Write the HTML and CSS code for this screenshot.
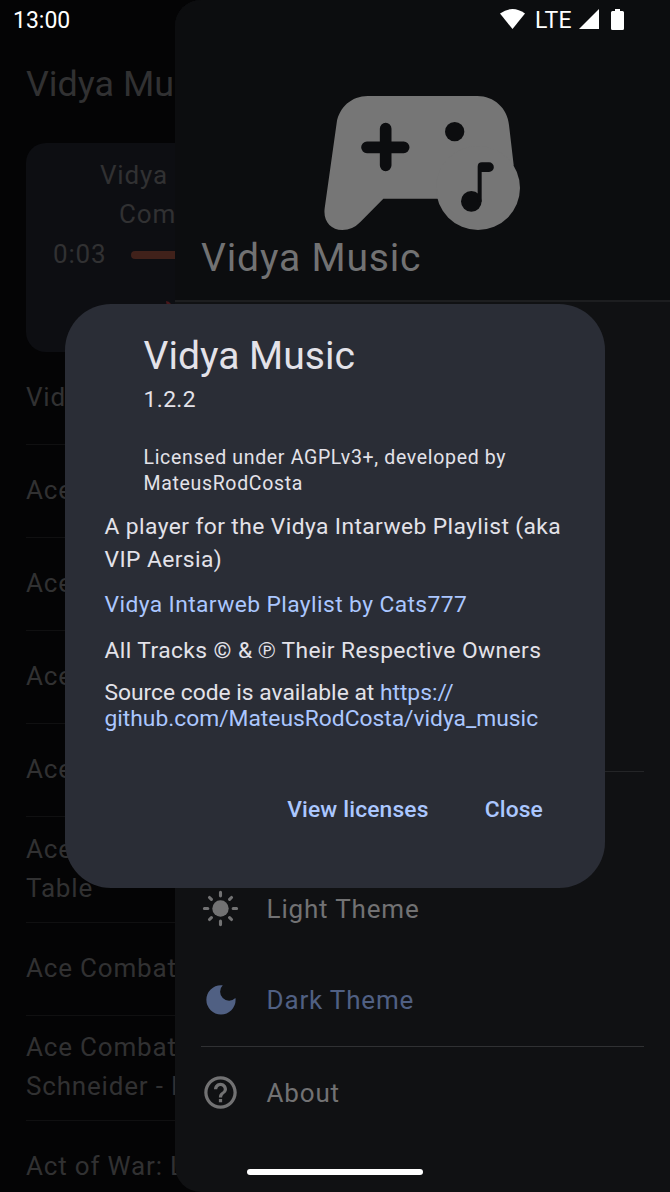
FILE: index.html
```
<!DOCTYPE html>
<html lang="en">
<head>
<meta charset="utf-8">
<title>Vidya Music</title>
<link rel="stylesheet" href="styles.css">
</head>
<body>
<div class="screen">
  <main class="player">
    <h1 class="app-title">Vidya Music</h1>
    <section class="now-playing">
      <p class="track">Vidya</p>
      <p class="track track-second">Coming</p>
      <div class="progress"><span class="time">0:03</span><span class="slider"></span></div>
      <svg class="skip" viewBox="0 0 12 12"><path d="M0 0Q3 0 5 3L12 12H2Z"/></svg>
    </section>
    <ul class="tracks">
      <li>Vid</li>
      <li>Ace</li>
      <li>Ace</li>
      <li>Ace</li>
      <li>Ace</li>
      <li class="two">Ace<br>Table</li>
      <li>Ace Combat</li>
      <li class="two">Ace Combat<br>Schneider - L</li>
      <li class="last">Act of War: L</li>
    </ul>
  </main>

  <aside class="drawer">
    <header class="drawer-header">
      <svg class="logo" viewBox="0 0 675 465">
        <path class="pad" d="M173 33H502C552 33 592 69 597 120L611 240L504 341H220L151 411Q128 435 97 435C62 435 39 408 44 370L80 114C87 67 125 33 173 33Z"/>
        <circle class="pad" cx="504" cy="309" r="126"/>
        <path class="plus" d="M227 131V241M171 187H281"/>
        <circle cx="434" cy="140" r="29"/><circle cx="484" cy="349" r="31"/>
        <path d="M503 349V245Q503 232 516 232H537A14 14 0 0 1 537 261H515V349Z"/>
      </svg>
      <h2>Vidya Music</h2>
    </header>
    <nav class="menu">
      <div class="menu-space"></div>
      <div class="themes">
        <div class="menu-item">
          <svg viewBox="0 0 40 40"><circle cx="20" cy="20" r="8.4" fill="currentColor"/><path class="ray" d="M20 3.500V7M20 33V36.500M3.500 20H7M33 20H36.500M8.700 8.700L10.700 10.700M29.300 29.300L31.300 31.300M31.300 8.700L29.300 10.700M10.700 29.300L8.700 31.300"/></svg>
          <span>Light Theme</span>
        </div>
        <div class="menu-item active">
          <svg viewBox="0 0 40 40"><path fill="currentColor" d="M20.500 5.300A15 15 0 1 0 35.500 20.300Q35.500 19.400 35.300 18.500A9 9 0 1 1 22.300 5.500Q21.400 5.300 20.500 5.300Z"/></svg>
          <span>Dark Theme</span>
        </div>
      </div>
      <div class="menu-item about-item">
        <svg viewBox="0 0 24 24"><path fill="currentColor" d="M11 18h2v-2h-2v2zm1-16C6.480 2 2 6.480 2 12s4.480 10 10 10 10-4.480 10-10S17.520 2 12 2zm0 18c-4.410 0-8-3.590-8-8s3.590-8 8-8 8 3.590 8 8-3.590 8-8 8zm0-14c-2.210 0-4 1.790-4 4h2c0-1.100.9-2 2-2s2 .9 2 2c0 2-3 1.750-3 5h2c0-2.250 3-2.500 3-5 0-2.210-1.790-4-4-4z"/></svg>
        <span>About</span>
      </div>
    </nav>
  </aside>

  <section class="dialog">
    <div class="about">
      <h2>Vidya Music</h2>
      <p class="version">1.2.2</p>
      <p class="license">Licensed under AGPLv3+, developed by<br>MateusRodCosta</p>
    </div>
    <div class="details">
      <p>A player for the Vidya Intarweb Playlist (aka<br>VIP Aersia)</p>
      <p class="link">Vidya Intarweb Playlist by Cats777</p>
      <p>All Tracks © &amp; ℗ Their Respective Owners</p>
      <p class="source">Source code is available at <span class="link">https://<br>github.com/MateusRodCosta/vidya_music</span></p>
    </div>
    <div class="actions"><span>View licenses</span><span>Close</span></div>
  </section>

  <div class="status">
    <span class="clock">13:00</span>
    <svg class="wifi" viewBox="0 0 25 20"><path d="M0 4.500Q12.500-4.500 25 4.500L12.500 20Z"/></svg>
    <span class="network">LTE</span>
    <svg class="signal" viewBox="0 0 20 20"><path d="M20 0V20H0Z"/></svg>
    <svg class="battery" viewBox="0 0 13 21"><path d="M4 0H9V2H11.500Q13 2 13 3.500V19.500Q13 21 11.500 21H1.500Q0 21 0 19.500V3.500Q0 2 1.500 2H4Z"/></svg>
  </div>
  <div class="home-bar"></div>
</div>
</body>
</html>
```
FILE: styles.css
```
* { box-sizing: border-box; }
body, h1, h2, p, ul { margin: 0; padding: 0; font-weight: 400; }
body { background: #040405; font-family: Roboto, sans-serif; }
svg { display: block; flex: none; }

.screen { position: relative; width: 670px; height: 1192px; overflow: hidden; background: #040405; }

.player { padding: 0 26px; color: #313132; font-size: 26px; letter-spacing: .82px; line-height: 39px; }
.app-title { height: 143px; padding-top: 58px; font-size: 35.9px; line-height: 52px; letter-spacing: 0; }
.now-playing { height: 209px; border-radius: 20px; background: #0d0e12; padding: 13px 26px; white-space: nowrap; }
.track { padding-left: 48px; }
.track-second { padding-left: 67px; }
.progress { display: flex; align-items: center; gap: 25px; padding: 1px 0 0 1px; }
.slider { flex: 1; height: 8px; border-radius: 4px; background: #40211a; }
.skip { width: 12px; height: 12px; margin: 27px 0 0 114px; fill: #48171b; }
.tracks { list-style: none; white-space: nowrap; }
.tracks li { height: 93px; padding-top: 26px; border-bottom: 1px solid #101011; }
.tracks .two { height: 105.500px; padding-top: 12.500px; }
.tracks .last { border: 0; height: 72px; }

.drawer { position: absolute; inset: 0 0 0 175px; border-radius: 26px 0 0 26px; background: #101113; color: #727273; overflow: hidden; }
.drawer-header { height: 302px; padding: 85px 26px 0; background: #0c0d0f; border-bottom: 2px solid #1d1e20; }
.logo { width: 225px; height: 155px; margin-left: 109px; fill: #0c0d0f; }
.logo .pad { fill: #767676; }
.logo .plus { fill: none; stroke: #0c0d0f; stroke-width: 35; stroke-linecap: round; }
.drawer h2 { font-size: 39.1px; line-height: 52px; letter-spacing: .82px; margin-top: -8px; }
.menu { padding: 0 26px; }
.menu-space { height: 470px; border-bottom: 1px solid #242527; }
.themes { height: 275px; padding-top: 91px; border-bottom: 1px solid #303133; }
.menu-item { display: flex; align-items: center; gap: 26.600px; height: 91px; font-size: 26px; letter-spacing: .82px; }
.menu-item svg { width: 39px; height: 39px; }
.ray { fill: none; stroke: currentColor; stroke-width: 3.200; stroke-linecap: round; }
.active { color: #506083; }

.dialog { position: absolute; left: 65px; top: 304px; width: 540px; height: 584px; padding: 26px 39.500px; border-radius: 46px; background: #2a2d36; color: #e3e2e9; white-space: nowrap; }
.about { padding-left: 39px; }
.about h2 { font-size: 39.1px; line-height: 52px; }
.version { padding-top: 1px; font-size: 22.800px; line-height: 33px; letter-spacing: .41px; }
.license { margin-top: 29px; font-size: 19.500px; line-height: 26px; letter-spacing: .67px; }
.details { display: flex; flex-direction: column; gap: 13px; margin-top: 14px; font-size: 22.800px; line-height: 32.600px; letter-spacing: .41px; }
.link { color: #abc7ff; }
.source { line-height: 26px; letter-spacing: 0; }
.actions { display: flex; justify-content: flex-end; gap: 56px; margin-top: 61px; padding-right: 22.500px; font-size: 22.800px; line-height: 34px; font-weight: 500; letter-spacing: .16px; color: #abc7ff; }

.status { position: absolute; inset: 0 46px auto 13px; height: 40px; display: flex; align-items: center; color: #fff; font-size: 23px; }
.status svg { fill: #fff; }
.clock { flex: 1; padding-top: 1px; }
.wifi { width: 25px; height: 20px; margin: -2px 10px 0 0; }
.network { margin-right: 7px; letter-spacing: .3px; }
.signal { width: 20px; height: 20px; margin: -2px 12px 0 0; }
.battery { width: 13px; height: 21px; margin-top: -1px; }
.home-bar { position: absolute; left: 247px; bottom: 17px; width: 176px; height: 6px; border-radius: 3px; background: #fff; }
```
